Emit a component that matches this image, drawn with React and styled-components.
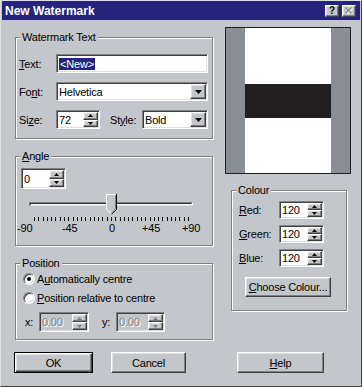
import React from 'react';
import styled, { createGlobalStyle } from 'styled-components';

const face = '#c3c6ca';

const GlobalStyle = createGlobalStyle`
  html, body { margin: 0; padding: 0; background: ${face}; }
  body { font-family: 'Liberation Sans', Arial, sans-serif; font-size: 11px; }
`;

const Window = styled.div`
  box-sizing: border-box;
  width: 362px;
  height: 387px;
  background: ${face};
  border: 1px solid;
  border-color: #dfdfdf #404040 #404040 #dfdfdf;
  display: flex;
  flex-direction: column;
  color: #000;
  letter-spacing: -0.2px;
`;

const TitleBar = styled.div`
  height: 19px;
  margin: 0 1px;
  background: #24247c;
  display: flex;
  align-items: center;
  gap: 3px;
  padding: 0 4px 0 3px;
`;

const TitleText = styled.div`
  flex: 1;
  color: #fff;
  font-weight: bold;
  font-size: 12px;
  letter-spacing: 0;
`;

const raised = `
  border: 1px solid;
  border-color: #fff #404040 #404040 #fff;
  box-shadow: inset -1px -1px #808080, inset 1px 1px #dfdfdf;
  background: ${face};
`;

const CaptionButton = styled.div`
  box-sizing: border-box;
  width: 14px;
  height: 12px;
  ${raised}
  display: flex;
  align-items: center;
  justify-content: center;
  font-weight: bold;
  font-size: 10px;
  line-height: 10px;
`;

const Main = styled.div`
  display: flex;
  gap: 12px;
  padding-left: 14px;
`;

const LeftColumn = styled.div`
  display: flex;
  flex-direction: column;
  gap: 11px;
  padding-top: 11px;
`;

const RightColumn = styled.div`
  display: flex;
  flex-direction: column;
  gap: 10px;
  padding-top: 7px;
`;

const Group = styled.fieldset`
  box-sizing: border-box;
  margin: 0 0 0 ${p => p.ml || 0}px;
  padding: 0;
  min-inline-size: 0;
  width: ${p => p.w || 198}px;
  height: ${p => p.h}px;
  border: 1px solid #808080;
  box-shadow: inset 1px 1px #fff, 1px 1px #fff;
`;

const Legend = styled.legend`
  margin-left: 4px;
  padding: 0 2px;
  line-height: 13px;
  background: ${face};
`;

const GroupBody = styled.div`
  display: flex;
  flex-direction: column;
  padding: ${p => p.pad || '0'};
`;

const Row = styled.div`
  display: flex;
  align-items: center;
  height: ${p => p.h || 19}px;
  margin-top: ${p => p.mt || 0}px;
  padding-left: ${p => p.pl || 0}px;
`;

const Label = styled.span`
  width: ${p => p.w}px;
  margin-left: ${p => p.ml || 0}px;
  flex-shrink: 0;
`;

const Field = styled.div`
  box-sizing: border-box;
  width: ${p => p.w}px;
  height: ${p => p.h || 19}px;
  background: ${p => (p.disabled ? face : '#fff')};
  border: 1px solid;
  border-color: #808080 #fff #fff #808080;
  box-shadow: inset 1px 1px #404040, inset -1px -1px #dfdfdf;
  display: flex;
  align-items: stretch;
  padding: 1px;
`;

const FieldText = styled.div`
  flex: 1;
  display: flex;
  align-items: center;
  padding-left: 1px;
  color: ${p => (p.disabled ? '#808080' : '#000')};
  text-shadow: ${p => (p.disabled ? '1px 1px #fff' : 'none')};
  white-space: nowrap;
  overflow: hidden;
`;

const Selected = styled.span`
  background: #24247c;
  color: #fff;
  padding: 0 1px;
`;

const DropButton = styled.div`
  box-sizing: border-box;
  width: 16px;
  ${raised}
  display: flex;
  align-items: center;
  justify-content: center;
`;

const SpinStack = styled.div`
  width: 15px;
  display: flex;
  flex-direction: column;
`;

const SpinButton = styled.div`
  box-sizing: border-box;
  flex: 1;
  ${raised}
  display: flex;
  align-items: center;
  justify-content: center;
`;

const Arrow = ({ up, small, grey }) => {
  const w = small ? 5 : 7;
  const h = small ? 3 : 4;
  const pts = up ? `0,${h} ${w},${h} ${w / 2},0` : `0,0 ${w},0 ${w / 2},${h}`;
  return (
    <svg width={w} height={h} viewBox={`0 0 ${w} ${h}`}>
      <polygon points={pts} fill={grey ? '#808080' : '#000'} />
    </svg>
  );
};

const Combo = ({ w, children }) => (
  <Field w={w}>
    <FieldText>{children}</FieldText>
    <DropButton>
      <Arrow />
    </DropButton>
  </Field>
);

const Spin = ({ w, h, value, disabled }) => (
  <Field w={w} h={h} disabled={disabled}>
    <FieldText disabled={disabled}>{value}</FieldText>
    <SpinStack>
      <SpinButton>
        <Arrow up small grey={disabled} />
      </SpinButton>
      <SpinButton>
        <Arrow small grey={disabled} />
      </SpinButton>
    </SpinStack>
  </Field>
);

const Slider = styled.svg`
  display: block;
  margin-top: 3px;
`;

const TickLabels = styled.div`
  display: flex;
  padding-left: 1px;
  line-height: 13px;
`;

const TickLabel = styled.span`
  width: ${p => p.w}px;
  flex-shrink: 0;
`;

const RadioRow = styled.label`
  display: flex;
  align-items: center;
  gap: 2px;
  height: 14px;
  margin-top: ${p => p.mt}px;
  padding-left: 7px;
`;

const RadioDot = styled.span`
  box-sizing: border-box;
  width: 12px;
  height: 12px;
  border-radius: 50%;
  background: #fff;
  border: 1px solid;
  border-color: #808080 #fff #fff #808080;
  box-shadow: inset 1px 1px #404040, inset -1px -1px #dfdfdf;
  display: flex;
  align-items: center;
  justify-content: center;
  &::after {
    content: '';
    width: 4px;
    height: 4px;
    border-radius: 50%;
    background: ${p => (p.checked ? '#000' : 'transparent')};
  }
`;

const Preview = styled.div`
  box-sizing: border-box;
  width: 126px;
  height: 147px;
  border: 1px solid #202020;
  display: flex;
`;

const PreviewMargin = styled.div`
  width: ${p => p.w}px;
  background: #8a8f95;
`;

const PreviewPage = styled.div`
  flex: 1;
  background: #fff;
  display: flex;
  flex-direction: column;
  padding-top: 56px;
`;

const PreviewBand = styled.div`
  height: 34px;
  background: #231f20;
`;

const PushButton = styled.div`
  box-sizing: border-box;
  width: ${p => p.w}px;
  height: ${p => p.h || 21}px;
  margin-left: ${p => (p.push ? 'auto' : `${p.ml || 0}px`)};
  margin-top: ${p => p.mt || 0}px;
  display: flex;
  align-items: center;
  justify-content: center;
  flex-shrink: 0;
  ${p =>
    p.isDefault
      ? `border: 1px solid #000;
         box-shadow: inset 1px 1px #fff, inset -1px -1px #404040, inset -2px -2px #808080, inset 2px 2px #dfdfdf;
         background: ${face};`
      : raised}
`;

const ButtonRow = styled.div`
  display: flex;
  gap: 18px;
  margin-top: 12px;
  padding: 0 37px 0 13px;
`;

const ticks = Array.from({ length: 37 }, (_, i) => 18 + (i * 154) / 36);

export default function App() {
  return (
    <>
      <GlobalStyle />
      <Window>
        <TitleBar>
          <TitleText>New Watermark</TitleText>
          <CaptionButton>?</CaptionButton>
          <CaptionButton>
            <svg width="8" height="7" viewBox="0 0 8 7">
              <path d="M1.5 1.5 L7.5 7.5 M7.5 1.5 L1.5 7.5" stroke="#fff" strokeWidth="1.3" />
              <path d="M0.5 0.5 L6.5 6.5 M6.5 0.5 L0.5 6.5" stroke="#8a8a8a" strokeWidth="1.3" />
            </svg>
          </CaptionButton>
        </TitleBar>

        <Main>
          <LeftColumn>
            <Group h={108}>
              <Legend>Watermark Text</Legend>
              <GroupBody pad="10px 4px 0 3px">
                <Row>
                  <Label w={37}><u>T</u>ext:</Label>
                  <Field w={152}>
                    <FieldText><Selected>&lt;New&gt;</Selected></FieldText>
                  </Field>
                </Row>
                <Row mt={9}>
                  <Label w={37}>Fo<u>n</u>t:</Label>
                  <Combo w={152}>Helvetica</Combo>
                </Row>
                <Row mt={9}>
                  <Label w={37}>Si<u>z</u>e:</Label>
                  <Spin w={44} value="72" />
                  <Label w={32} ml={10}>St<u>y</u>le:</Label>
                  <Combo w={66}>Bold</Combo>
                </Row>
              </GroupBody>
            </Group>

            <Group h={96}>
              <Legend><u>A</u>ngle</Legend>
              <GroupBody pad="5px 0 0 0">
                <Row h={21} pl={5}>
                  <Spin w={45} h={21} value="0" />
                </Row>
                <Slider width="196" height="30" viewBox="0 0 196 30">
                  <rect x="13" y="10" width="164" height="4" fill="#fff" />
                  <path d="M13 10.5 H176.5 M13.5 10 V14" stroke="#808080" />
                  <path d="M14 11.5 H175.5 M14.5 11 V13" stroke="#303030" />
                  <path d="M14 13.5 H177" stroke="#dfdfdf" />
                  {ticks.map(x => (
                    <line key={x} x1={Math.round(x) + 0.5} x2={Math.round(x) + 0.5} y1="25" y2="29" stroke="#000" />
                  ))}
                  <polygon points="90,2 101,2 101,17 95.5,22.5 90,17" fill={face} />
                  <path d="M90.5 17 V2.5 H100" stroke="#fff" fill="none" />
                  <path d="M90.5 17 L95.5 22" stroke="#fff" fill="none" />
                  <path d="M100.5 2 V17.3 L95.5 22.3" stroke="#000" fill="none" />
                  <path d="M99.5 3 V16.8 L95.5 20.8" stroke="#808080" fill="none" />
                </Slider>
                <TickLabels>
                  <TickLabel w={45}>-90</TickLabel>
                  <TickLabel w={47}>-45</TickLabel>
                  <TickLabel w={33}>0</TickLabel>
                  <TickLabel w={40}>+45</TickLabel>
                  <TickLabel w={20}>+90</TickLabel>
                </TickLabels>
              </GroupBody>
            </Group>

            <Group h={83}>
              <Legend>Position</Legend>
              <GroupBody>
                <RadioRow mt={2}>
                  <RadioDot checked />
                  <span>A<u>u</u>tomatically centre</span>
                </RadioRow>
                <RadioRow mt={5}>
                  <RadioDot />
                  <span><u>P</u>osition relative to centre</span>
                </RadioRow>
                <Row h={20} mt={7} pl={9}>
                  <Label w={14}>x:</Label>
                  <Spin w={50} h={20} value="0.00" disabled />
                  <Label w={14} ml={13}>y:</Label>
                  <Spin w={49} h={20} value="0.00" disabled />
                </Row>
              </GroupBody>
            </Group>
          </LeftColumn>

          <RightColumn>
            <Preview>
              <PreviewMargin w={19} />
              <PreviewPage>
                <PreviewBand />
              </PreviewPage>
              <PreviewMargin w={19} />
            </Preview>

            <Group h={127} w={116} ml={6}>
              <Legend>Colour</Legend>
              <GroupBody pad="4px 0 0 7px">
                <Row h={18}>
                  <Label w={40}><u>R</u>ed:</Label>
                  <Spin w={45} h={18} value="120" />
                </Row>
                <Row h={18} mt={6}>
                  <Label w={40}><u>G</u>reen:</Label>
                  <Spin w={45} h={18} value="120" />
                </Row>
                <Row h={18} mt={6}>
                  <Label w={40}><u>B</u>lue:</Label>
                  <Spin w={45} h={18} value="120" />
                </Row>
                <PushButton w={86} h={20} ml={6} mt={10}>
                  <span><u>C</u>hoose Colour...</span>
                </PushButton>
              </GroupBody>
            </Group>
          </RightColumn>
        </Main>

        <ButtonRow>
          <PushButton w={79} isDefault>OK</PushButton>
          <PushButton w={75}>Cancel</PushButton>
          <PushButton w={87} push><span><u>H</u>elp</span></PushButton>
        </ButtonRow>
      </Window>
    </>
  );
}
